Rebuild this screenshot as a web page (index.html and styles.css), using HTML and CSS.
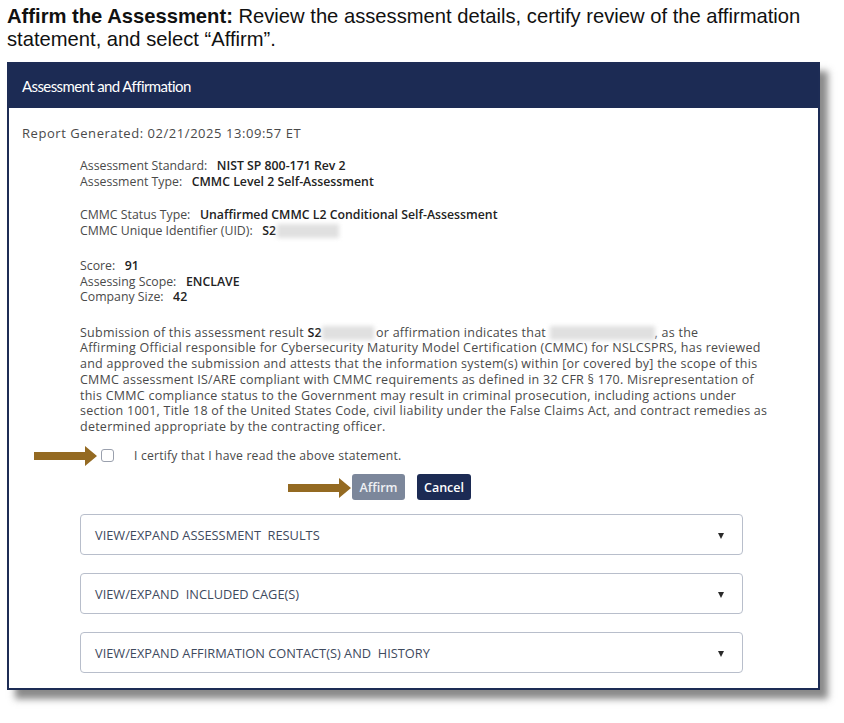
FILE: index.html
```html
<!DOCTYPE html>
<html>
<head>
<meta charset="utf-8">
<link rel="stylesheet" href="styles.css">
</head>
<body>
<div class="page">
  <p class="intro"><b>Affirm the Assessment:</b> Review the assessment details, certify review of the affirmation<br>statement, and select “Affirm”.</p>
  <div class="panel">
    <div class="panel-head">Assessment and Affirmation</div>
    <div class="panel-body">
      <div class="report">Report Generated: 02/21/2025 13:09:57 ET</div>
      <div class="group first">
        <div class="row">Assessment Standard:&nbsp;&nbsp;&nbsp;<b>NIST SP 800-171 Rev 2</b></div>
        <div class="row">Assessment Type:&nbsp;&nbsp;&nbsp;<b>CMMC Level 2 Self-Assessment</b></div>
      </div>
      <div class="group g2">
        <div class="row">CMMC Status Type:&nbsp;&nbsp;&nbsp;<b>Unaffirmed CMMC L2 Conditional Self-Assessment</b></div>
        <div class="row">CMMC Unique Identifier (UID):&nbsp;&nbsp;&nbsp;<b>S2</b><span class="blur b-uid"></span></div>
      </div>
      <div class="group g3">
        <div class="row">Score:&nbsp;&nbsp;&nbsp;<b>91</b></div>
        <div class="row">Assessing Scope:&nbsp;&nbsp;&nbsp;<b>ENCLAVE</b></div>
        <div class="row">Company Size:&nbsp;&nbsp;&nbsp;<b>42</b></div>
      </div>
      <p class="statement">Submission of this assessment result <b>S2</b><span class="blur b-id"></span>or affirmation indicates that <span class="blur b-name"></span>, as the<br>Affirming Official responsible for Cybersecurity Maturity Model Certification (CMMC) for NSLCSPRS, has reviewed<br>and approved the submission and attests that the information system(s) within [or covered by] the scope of this<br>CMMC assessment IS/ARE compliant with CMMC requirements as defined in 32 CFR § 170. Misrepresentation of<br>this CMMC compliance status to the Government may result in criminal prosecution, including actions under<br>section 1001, Title 18 of the United States Code, civil liability under the False Claims Act, and contract remedies as<br>determined appropriate by the contracting officer.</p>
      <label class="certify"><span class="box"></span><span class="certify-text">I certify that I have read the above statement.</span></label>
      <div class="actions">
        <button class="btn btn-affirm">Affirm</button>
        <button class="btn btn-cancel">Cancel</button>
      </div>
      <div class="accordion">
        <div class="acc">VIEW/EXPAND ASSESSMENT&nbsp; RESULTS<span class="caret"></span></div>
        <div class="acc">VIEW/EXPAND&nbsp; INCLUDED CAGE(S)<span class="caret"></span></div>
        <div class="acc">VIEW/EXPAND AFFIRMATION CONTACT(S) AND&nbsp; HISTORY<span class="caret"></span></div>
      </div>
    </div>
  </div>
  <svg class="arrow arrow-1" width="64" height="20" viewBox="0 0 64 20"><path d="M0 6 H51 V0 L63 10 L51 20 V14 H0 Z" fill="#946a22"/></svg>
  <svg class="arrow arrow-2" width="64" height="20" viewBox="0 0 64 20"><path d="M0 6 H51 V0 L63 10 L51 20 V14 H0 Z" fill="#946a22"/></svg>
</div>
</body>
</html>
```
FILE: styles.css
```css
html, body { margin: 0; padding: 0; background: #fff; }
.page { position: relative; width: 844px; height: 723px; overflow: hidden; }
.intro {
  margin: 0;
  padding: 5px 0 0 7px;
  font-family: "Liberation Sans", Arial, sans-serif;
  font-size: 20.2px;
  line-height: 23px;
  color: #111;
  letter-spacing: 0;
}
.intro b { font-weight: bold; }
.panel {
  margin: 11px 0 0 7px;
  width: 813px;
  height: 628px;
  box-sizing: border-box;
  border: 2px solid #1d2c55;
  background: #fff;
  box-shadow: 8px 9px 7px rgba(60, 60, 60, 0.6);
}
.panel-head {
  height: 44px;
  line-height: 44px;
  background: #1c2b54;
  color: #fff;
  font-family: Lato, "Noto Sans", sans-serif;
  font-size: 15px;
  letter-spacing: -0.6px;
  padding-left: 13px;
}
.panel-body {
  padding: 17px 0 0 13px;
  font-family: "Open Sans", "Noto Sans", sans-serif;
  color: #4a4a4a;
}
.report { font-size: 13px; line-height: 16px; letter-spacing: 0.55px; }
.group { margin-left: 58px; font-size: 12.3px; line-height: 15.5px; }
.group b { color: #222; font-weight: 600; }
.group.first { margin-top: 17px; }
.group.g2 { margin-top: 18px; }
.group.g3 { margin-top: 20px; }
.blur {
  display: inline-block;
  height: 14px;
  vertical-align: -3px;
  background: #e0e0e0;
  filter: blur(2px);
}
.b-uid { width: 62px; margin-left: 1px; }
.b-id { width: 52px; margin-right: 2px; }
.b-name { width: 105px; }
.statement {
  margin: 20px 0 0 58px;
  font-size: 12.5px;
  line-height: 15.8px;
  letter-spacing: 0.25px;
  color: #4a4a4a;
}
.statement b { color: #222; font-weight: 600; }
.certify {
  display: flex;
  align-items: center;
  margin: 12px 0 0 79px;
  height: 16px;
}
.box {
  width: 11px;
  height: 11px;
  border: 1.5px solid #9aa0ad;
  border-radius: 3px;
  background: #fff;
}
.certify-text { margin-left: 20px; font-size: 12.2px; letter-spacing: 0.2px; color: #4a4a4a; }
.actions { display: flex; gap: 12px; margin: 11px 0 0 330px; }
.btn {
  height: 26px;
  border: 0;
  border-radius: 3px;
  color: #fff;
  font-family: "Open Sans", "Noto Sans", sans-serif;
  font-size: 12.5px;
  font-weight: 600;
  padding: 0;
}
.btn-affirm { width: 53px; background: #7c879b; color: #eef0f4; }
.btn-cancel { width: 54px; background: #1c2b54; }
.accordion { margin: 14px 0 0 58px; width: 663px; display: flex; flex-direction: column; gap: 18px; }
.acc {
  height: 41px;
  box-sizing: border-box;
  border: 1px solid #b8becb;
  border-radius: 4px;
  display: flex;
  align-items: center;
  padding: 0 0 0 14px;
  font-family: "Open Sans", "Noto Sans", sans-serif;
  font-size: 12.8px;
  letter-spacing: 0;
  color: #3e4a5e;
  position: relative;
}
.caret {
  position: absolute;
  right: 18px;
  top: 18px;
  width: 0;
  height: 0;
  border-left: 3.5px solid transparent;
  border-right: 3.5px solid transparent;
  border-top: 6px solid #2a2a2a;
}
.arrow { position: absolute; }
.arrow-1 { left: 34px; top: 446px; }
.arrow-2 { left: 288px; top: 478px; }
```
